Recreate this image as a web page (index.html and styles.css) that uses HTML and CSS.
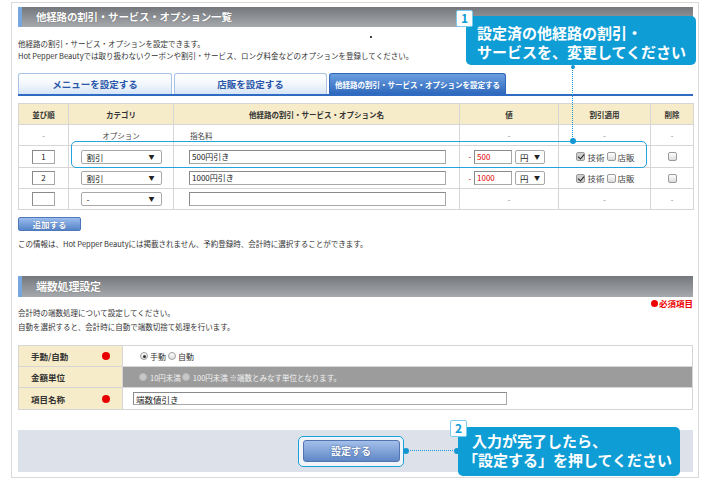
FILE: index.html
```html
<!DOCTYPE html>
<html lang="ja">
<head>
<meta charset="utf-8">
<title>他経路の割引・サービス・オプション一覧</title>
<link rel="stylesheet" href="styles.css">
</head>
<body>
<div class="frame">
  <h2 class="sec-head">他経路の割引・サービス・オプション一覧</h2>
  <div class="desc">
    <p>他経路の割引・サービス・オプションを設定できます。</p>
    <p>Hot Pepper Beautyでは取り扱わないクーポンや割引・サービス、ロング料金などのオプションを登録してください。</p>
  </div>

  <div class="tabs">
    <div class="tab t1">メニューを設定する</div>
    <div class="tab t2">店販を設定する</div>
    <div class="tab active">他経路の割引・サービス・オプションを設定する</div>
  </div>

  <table class="opt">
    <tr class="head">
      <th class="c1">並び順</th>
      <th class="c2">カテゴリ</th>
      <th class="c3">他経路の割引・サービス・オプション名</th>
      <th class="c4">値</th>
      <th class="c5">割引適用</th>
      <th class="c6">削除</th>
    </tr>
    <tr class="r0">
      <td class="dash">-</td>
      <td>オプション</td>
      <td class="name">指名料</td>
      <td class="dash">-</td>
      <td class="dash">-</td>
      <td class="dash">-</td>
    </tr>
    <tr class="r1">
      <td><span class="inp num">1</span></td>
      <td><span class="sel cat">割引<i>▼</i></span></td>
      <td class="name"><span class="inp wide">500円引き</span></td>
      <td class="val"><div class="valbox"><span class="minus">-</span><span class="inp price">500</span><span class="sel unit">円<i>▼</i></span></div></td>
      <td><div class="chks"><span class="chk on"></span>技術<span class="chk"></span>店販</div></td>
      <td><div class="chks"><span class="chk"></span></div></td>
    </tr>
    <tr class="r2">
      <td><span class="inp num">2</span></td>
      <td><span class="sel cat">割引<i>▼</i></span></td>
      <td class="name"><span class="inp wide">1000円引き</span></td>
      <td class="val"><div class="valbox"><span class="minus">-</span><span class="inp price">1000</span><span class="sel unit">円<i>▼</i></span></div></td>
      <td><div class="chks"><span class="chk on"></span>技術<span class="chk"></span>店販</div></td>
      <td><div class="chks"><span class="chk"></span></div></td>
    </tr>
    <tr class="r3">
      <td><span class="inp num"></span></td>
      <td><span class="sel cat">-<i>▼</i></span></td>
      <td class="name"><span class="inp wide"></span></td>
      <td class="dash">-</td>
      <td class="dash">-</td>
      <td class="dash">-</td>
    </tr>
  </table>

  <div class="add-btn">追加する</div>
  <p class="note">この情報は、Hot Pepper Beautyには掲載されません、予約登録時、会計時に選択することができます。</p>

  <h2 class="sec-head second">端数処理設定</h2>
  <div class="req"><span class="reqdot"></span>必須項目</div>
  <div class="desc desc2">
    <p>会計時の端数処理について設定してください。</p>
    <p>自動を選択すると、会計時に自動で端数切捨て処理を行います。</p>
  </div>

  <table class="form">
    <tr class="f1">
      <th><div class="lab"><span>手動/自動</span><i class="dot"></i></div></th>
      <td><div class="radios"><span class="radio on"></span>手動<span class="radio"></span>自動</div></td>
    </tr>
    <tr class="f2 dis">
      <th><div class="lab"><span>金額単位</span></div></th>
      <td><div class="radios"><span class="radio"></span>10円未満<span class="radio"></span>100円未満 ※端数とみなす単位となります。</div></td>
    </tr>
    <tr class="f3">
      <th><div class="lab"><span>項目名称</span><i class="dot"></i></div></th>
      <td><span class="inp item">端数値引き</span></td>
    </tr>
  </table>

  <div class="bottom">
    <div class="hl-btn"><div class="submit">設定する</div></div>
  </div>
</div>

<!-- tutorial overlays -->
<div class="stray"></div>
<div class="hl-row"></div>
<div class="vline"></div>
<div class="odot d1"></div>
<div class="odot d2"></div>
<div class="callout c-one">
  <p>設定済の他経路の割引・</p>
  <p>サービスを、変更してください</p>
</div>
<div class="badge b1">1</div>

<div class="hline"></div>
<div class="odot d3"></div>
<div class="odot d4"></div>
<div class="callout c-two">
  <p>入力が完了したら、</p>
  <p class="bracket">「設定する」を押してください</p>
</div>
<div class="badge b2">2</div>
</body>
</html>
```

FILE: styles.css
```css
* { box-sizing: border-box; margin: 0; padding: 0; }

html, body { width: 710px; height: 480px; }

body {
  margin: 0;
  padding: 2px 0 0 11px;
  background: #fff;
  color: #333;
  font-family: "Noto Sans CJK JP", "Noto Sans", sans-serif;
  overflow: hidden;
}

.frame {
  width: 688px;
  height: 476px;
  border: 1px solid #d9d9d9;
  padding: 4px 5px 0 6px;
}

/* section heading */
.sec-head {
  height: 20px;
  background: linear-gradient(#74777c, #a6a9ae);
  border-left: 4px solid #78a7df;
  color: #fff;
  font-size: 10.5px;
  font-weight: bold;
  line-height: 20px;
  padding-left: 14px;
  text-shadow: 0 0 1px #555;
  letter-spacing: -0.2px;
}
.sec-head.second {
  margin-top: 26px;
  height: 21px;
  line-height: 21px;
  font-size: 11px;
}

.desc {
  margin-top: 11px;
  font-size: 7.5px;
  line-height: 12px;
  color: #333;
}
.desc2 {
  margin-top: 0;
  line-height: 14px;
}

/* tabs */
.tabs {
  margin-top: 11px;
  display: flex;
  gap: 2px;
  height: 23px;
  border-bottom: 2px solid #2f6bc2;
}
.tab {
  height: 21px;
  border: 1px solid #a9c3e6;
  border-bottom: none;
  border-radius: 3px 3px 0 0;
  background: linear-gradient(#ffffff 0%, #f3f7fc 50%, #d7e5f6 100%);
  color: #2a56a8;
  font-size: 9.5px;
  font-weight: bold;
  line-height: 20px;
  text-align: center;
}
.t1 { width: 154px; }
.t2 { width: 153px; }
.tab.active {
  width: 177px;
  border-color: #2d66bb;
  background: linear-gradient(#6b9fe0, #2e68bc);
  color: #fff;
  font-size: 7.5px;
  font-weight: bold;
  line-height: 21px;
}

/* options table */
.opt {
  margin-top: 7px;
  width: 675px;
  border-collapse: collapse;
  table-layout: fixed;
  border: 1px solid #c8c8c8;
  font-size: 7.5px;
}
.opt th, .opt td {
  border: 1px solid #d6d6d6;
  padding: 0;
  text-align: center;
  vertical-align: middle;
}
.opt th {
  background: #f7ecca;
  font-weight: bold;
  color: #333;
  height: 21px;
}
.opt td { height: 21px; color: #444; }
.opt .r1 td { height: 22px; }
.c1 { width: 50px; }
.c2 { width: 105px; }
.c3 { width: 286px; }
.c4 { width: 99px; }
.c5 { width: 92px; }
.c6 { width: 43px; }
.opt td.name { text-align: left; padding-left: 15px; }
.opt .r0 td.name { padding-left: 16px; }
.opt td.dash { color: #777; }

.inp {
  display: inline-block;
  height: 14px;
  border: 1px solid #a8a8a8;
  border-top-color: #8a8a8a;
  border-left-color: #8a8a8a;
  background: #fff;
  font-size: 8px;
  line-height: 12px;
  padding-left: 2px;
  text-align: left;
  vertical-align: middle;
  color: #222;
}
.inp.num { width: 23px; text-align: center; padding-left: 0; }
.inp.wide { width: 257px; }
.inp.price { width: 38px; color: #e00000; }
.inp.item { width: 374px; height: 13px; font-size: 8.5px; }

.sel {
  display: inline-flex;
  justify-content: space-between;
  align-items: center;
  height: 14px;
  border: 1px solid #a8a8a8;
  border-radius: 2px;
  background: #fff;
  font-size: 8.5px;
  line-height: 12px;
  padding: 0 6px 0 5px;
  vertical-align: middle;
  color: #222;
}
.sel i { font-style: normal; font-size: 6px; }
.sel.cat { width: 81px; }
.sel.unit { width: 30px; padding: 0 4px 0 4px; }

.valbox {
  display: flex;
  align-items: center;
  padding-left: 6px;
}
.minus { color: #e00000; width: 8px; font-size: 8px; }
.valbox .sel { margin-left: 3px; }

.chks {
  display: flex;
  justify-content: center;
  align-items: center;
  font-size: 8.5px;
  color: #444;
}
.chk {
  display: inline-block;
  width: 9px;
  height: 9px;
  border: 1px solid #9a9a9a;
  border-radius: 2px;
  background: linear-gradient(#ffffff, #dcdcdc);
  margin: 0 2px 0 2px;
  position: relative;
}
.chk.on {
  background: #cfcfcf;
}
.chk.on::after {
  content: "";
  position: absolute;
  left: 2px;
  top: 0px;
  width: 3px;
  height: 5px;
  border: solid #222;
  border-width: 0 1.5px 1.5px 0;
  transform: rotate(40deg);
}

.add-btn {
  margin-top: 7px;
  width: 63px;
  height: 14px;
  border: 1px solid #4d79bb;
  border-radius: 2px;
  background: linear-gradient(#9cbdee, #5584c8);
  color: #fff;
  font-size: 8.5px;
  font-weight: bold;
  line-height: 12px;
  text-align: center;
  text-shadow: 0 0 1px #2a4f8c;
}
.note {
  margin-top: 7px;
  font-size: 7.5px;
  line-height: 12px;
}

.req {
  height: 9px;
  font-size: 8.5px;
  font-weight: bold;
  line-height: 12px;
  color: #ee0000;
  display: flex;
  justify-content: flex-end;
  align-items: center;
  padding-top: 3px;
}
.reqdot {
  display: inline-block;
  width: 7px;
  height: 7px;
  border-radius: 50%;
  background: #ee0000;
  margin-right: 1px;
}

/* form table */
.form {
  margin-top: 11px;
  width: 675px;
  border-collapse: collapse;
  table-layout: fixed;
  border: 1px solid #c8c8c8;
}
.form th {
  width: 104px;
  background: #f7ecca;
  border: 1px solid #d6d6d6;
  padding: 0;
  font-size: 8.5px;
  font-weight: bold;
  color: #333;
  text-align: left;
}
.form td {
  border: 1px solid #d6d6d6;
  padding: 0 0 0 10px;
  font-size: 8px;
  color: #333;
}
.form .f1 th, .form .f1 td { height: 21px; }
.form .f2 th, .form .f2 td { height: 21px; }
.form .f3 th, .form .f3 td { height: 22px; }
.lab {
  display: flex;
  justify-content: space-between;
  align-items: center;
  padding: 0 12px 0 12px;
}
.dot {
  display: inline-block;
  width: 8px;
  height: 8px;
  border-radius: 50%;
  background: #e80000;
}
.radios {
  display: flex;
  align-items: center;
  padding-left: 5px;
}
.radio {
  display: inline-block;
  width: 8px;
  height: 8px;
  border-radius: 50%;
  border: 1px solid #a0a0a0;
  background: linear-gradient(#fff, #ddd);
  margin-right: 2px;
  margin-left: 2px;
  position: relative;
}
.radio.on::after {
  content: "";
  position: absolute;
  left: 1.5px;
  top: 1.5px;
  width: 3px;
  height: 3px;
  border-radius: 50%;
  background: #333;
}
.form .dis td {
  background: #9c9c9c;
  color: #f2f2f2;
  font-size: 7.5px;
}
.form .dis .radio {
  border-color: #b9b9b9;
  background: #c8c8c8;
  margin-right: 3px;
  margin-left: 1px;
}

/* bottom submit area */
.bottom {
  margin-top: 20px;
  height: 42px;
  background: #dde2ea;
  display: flex;
  align-items: center;
  padding-left: 280px;
}
.hl-btn {
  border: 1.5px solid #1ba1d9;
  border-radius: 5px;
  padding: 3.5px;
  background: #f1f4f8;
}
.submit {
  width: 97px;
  height: 22px;
  border: 1px solid #5374b0;
  border-radius: 3px;
  background: linear-gradient(#a4c0ea, #5f87c6);
  color: #fff;
  font-size: 10px;
  font-weight: bold;
  line-height: 20px;
  text-align: center;
  text-shadow: 0 0 2px #2c4a80;
}

/* overlays (tutorial annotations) */
.stray {
  position: absolute;
  left: 370px;
  top: 36px;
  width: 2px;
  height: 2px;
  background: #444;
}
.hl-row {
  position: absolute;
  left: 71px;
  top: 141px;
  width: 576px;
  height: 27px;
  border: 1.5px solid #24a4dc;
  border-radius: 5px;
}
.vline {
  position: absolute;
  left: 572px;
  top: 66px;
  height: 75px;
  border-left: 1.5px dotted #1a9ad6;
}
.hline {
  position: absolute;
  left: 406px;
  top: 450px;
  width: 51px;
  border-top: 1.5px dotted #1a9ad6;
}
.odot {
  position: absolute;
  border-radius: 50%;
  background: #1296d2;
}
.d1 { left: 571px; top: 65px; width: 4px; height: 4px; }
.d2 { left: 570px; top: 138px; width: 6px; height: 6px; }
.d3 { left: 403px; top: 448px; width: 6px; height: 6px; }
.d4 { left: 454px; top: 448px; width: 6px; height: 6px; }

.callout {
  position: absolute;
  background: #0f9dd5;
  border-radius: 5px;
  color: #fff;
  font-size: 15px;
  font-weight: bold;
  line-height: 19px;
  white-space: nowrap;
}
.c-one {
  left: 466px;
  top: 16px;
  width: 230px;
  height: 49px;
  padding: 7px 0 0 11px;
}
.c-two {
  left: 458px;
  top: 427px;
  width: 222px;
  height: 49px;
  padding: 4px 0 0 14px;
}
.c-two .bracket { margin-left: -9px; }

.badge {
  position: absolute;
  width: 17px;
  height: 17px;
  background: #fff;
  border: 1.5px solid #7ccbee;
  border-radius: 2px;
  color: #0f9dd5;
  font-size: 12px;
  font-weight: bold;
  line-height: 14px;
  text-align: center;
}
.b1 { left: 456px; top: 10px; }
.b2 { left: 450px; top: 420px; }
```
